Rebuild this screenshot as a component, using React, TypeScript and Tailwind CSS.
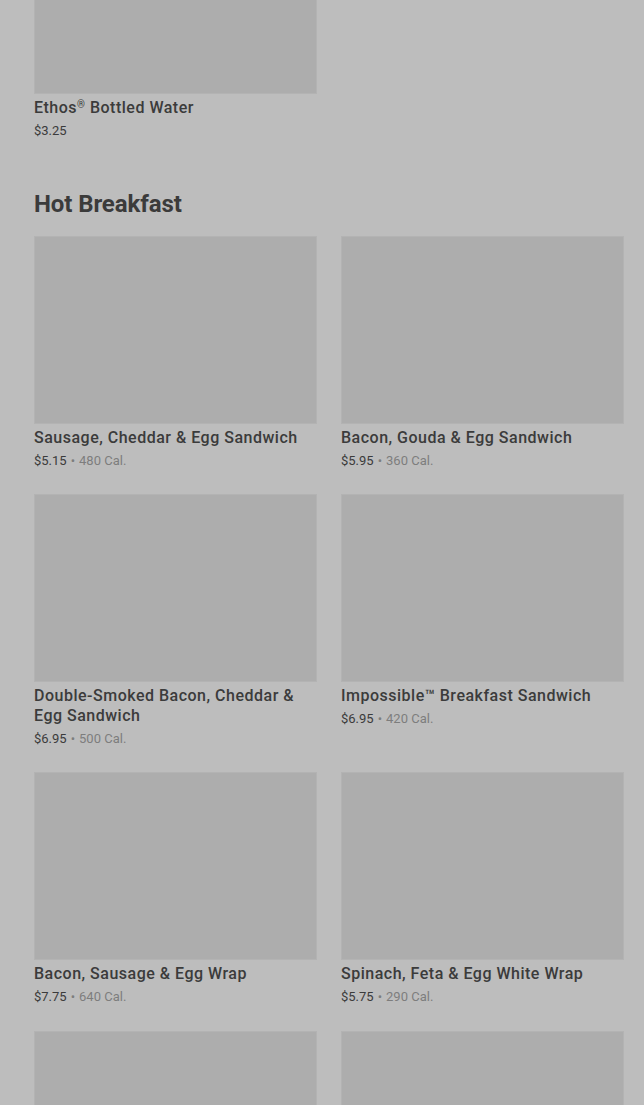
import React from 'react';

type Item = { name: React.ReactNode; key: string; price: string; cal?: string };

const drinks: Item[] = [
    {
        key: 'ethos',
        name: (
            <>
                Ethos<sup className="text-[10px] -top-[5px]">®</sup> Bottled Water
            </>
        ),
        price: '$3.25',
    },
];

const hotBreakfast: Item[] = [
    { key: 'sceg', name: 'Sausage, Cheddar & Egg Sandwich', price: '$5.15', cal: '480 Cal.' },
    { key: 'bgeg', name: 'Bacon, Gouda & Egg Sandwich', price: '$5.95', cal: '360 Cal.' },
    { key: 'dsb', name: 'Double-Smoked Bacon, Cheddar & Egg Sandwich', price: '$6.95', cal: '500 Cal.' },
    { key: 'imp', name: 'Impossible™ Breakfast Sandwich', price: '$6.95', cal: '420 Cal.' },
    { key: 'bsew', name: 'Bacon, Sausage & Egg Wrap', price: '$7.75', cal: '640 Cal.' },
    { key: 'sfew', name: 'Spinach, Feta & Egg White Wrap', price: '$5.75', cal: '290 Cal.' },
];

function ProductImage() {
    return <div className="h-[188px] w-full bg-[#adadad] border border-[#b3b3b3]"></div>;
}

function ProductCard({ item }: { item: Item }) {
    return (
        <div className="flex flex-col">
            <ProductImage />
            <h3 className="mt-[4px] text-[16px] leading-[20px] font-medium tracking-[0.5px] text-[#3b3b3b]">{item.name}</h3>
            <p className="mt-[3px] text-[13px] leading-[20px] text-[#3b3b3b]">
                {item.price}
                {item.cal && (
                    <>
                        <span className="mx-[4px] text-[#7d7d7d]">•</span>
                        <span className="text-[#7d7d7d]">{item.cal}</span>
                    </>
                )}
            </p>
        </div>
    );
}

export default function App() {
    return (
        <div className="h-screen bg-[#bdbdbd] overflow-hidden" style={{ fontFamily: 'Roboto, "Liberation Sans", sans-serif' }}>
            <main className="-mt-[94px] pl-[34px] pr-[20px]">
                {/* --- seccion anterior (scrolleada) --- */}
                <section className="grid grid-cols-2 gap-x-[24px] gap-y-[23px]">
                    {drinks.map((d) => (
                        <ProductCard key={d.key} item={d} />
                    ))}
                </section>

                {/* --- Hot Breakfast --- */}
                <section className="mt-[48px]">
                    <h2 className="text-[24px] leading-[30px] font-bold text-[#3b3b3b] tracking-[-0.1px]">Hot Breakfast</h2>
                    <div className="mt-[17px] grid grid-cols-2 gap-x-[24px] gap-y-[23px]">
                        {hotBreakfast.map((p) => (
                            <ProductCard key={p.key} item={p} />
                        ))}
                        {/* siguiente fila, solo se ve el inicio de las imagenes */}
                        <div className="mt-[1px]"><ProductImage /></div>
                        <div className="mt-[1px]"><ProductImage /></div>
                    </div>
                </section>
            </main>
        </div>
    );
}
